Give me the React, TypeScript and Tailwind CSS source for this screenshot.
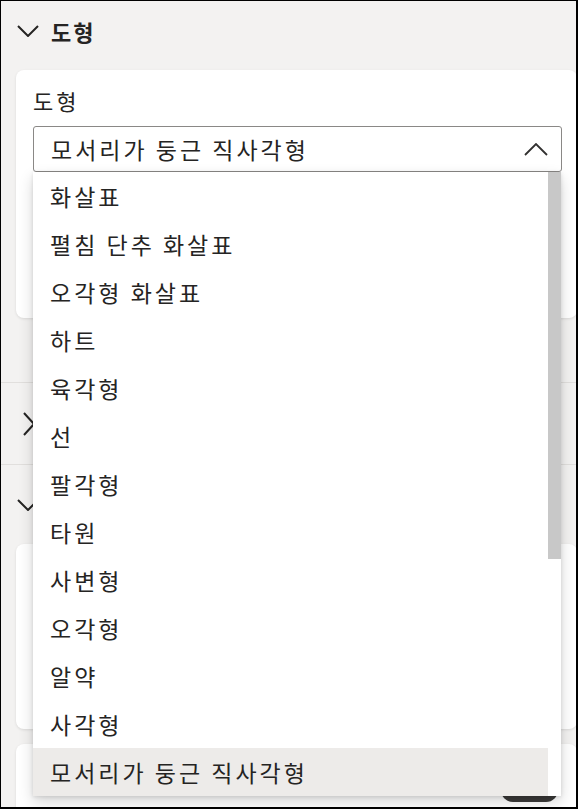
import React from "react";

const shapes: string[] = [
  "화살표",
  "펼침 단추 화살표",
  "오각형 화살표",
  "하트",
  "육각형",
  "선",
  "팔각형",
  "타원",
  "사변형",
  "오각형",
  "알약",
  "사각형",
  "모서리가 둥근 직사각형",
];

const selected = "모서리가 둥근 직사각형";

const ChevronDown: React.FC = () => (
  <svg width="22" height="12" viewBox="0 0 22 12" fill="none">
    <polyline points="1,1 11,11 21,1" stroke="#252423" strokeWidth="2" />
  </svg>
);

const ChevronRight: React.FC = () => (
  <svg width="12" height="24" viewBox="0 0 12 24" fill="none">
    <polyline points="1,1 11,12 1,23" stroke="#252423" strokeWidth="2" />
  </svg>
);

const ChevronUp: React.FC = () => (
  <svg width="24" height="13" viewBox="0 0 24 13" fill="none">
    <polyline points="1,12 12,1 23,12" stroke="#323130" strokeWidth="1.8" />
  </svg>
);

const ShapeDropdown: React.FC = () => (
  <div className="relative w-[529px]">
    <div className="h-[46px] flex items-center justify-between rounded-[3px] border border-[#8a8886] bg-white pl-[17px] pr-[13px] text-[23px] tracking-[3px]">
      <span>{selected}</span>
      <ChevronUp />
    </div>
    <div className="absolute left-0 top-full z-10 w-[528px] h-[624px] bg-white shadow-[0_6px_14px_rgba(0,0,0,0.16),0_1px_4px_rgba(0,0,0,0.12)]">
      <div className="w-[515px]">
        {shapes.map((shape) => (
          <div
            key={shape}
            className={
              shape === selected
                ? "h-[48px] flex items-center pl-[17px] text-[23px] tracking-[3px] bg-[#edebe9]"
                : "h-[48px] flex items-center pl-[17px] text-[23px] tracking-[3px]"
            }
          >
            {shape}
          </div>
        ))}
      </div>
      <div className="absolute right-0 top-0 w-[13px] h-[387px] bg-[#c8c8c8]" />
    </div>
  </div>
);

export default function App() {
  return (
    <div className="w-[578px] h-[809px] overflow-hidden border-l border-t border-r-2 border-b-2 border-black bg-[#f3f2f1] text-[#252423] font-['Noto_Sans_CJK_KR','Noto_Sans',sans-serif]">
      {/* shape section */}
      <div className="h-[60px] flex items-center gap-[12px] pl-[16px]">
        <ChevronDown />
        <span className="text-[22px] font-bold tracking-[2px]">도형</span>
      </div>
      <div className="mt-[9px] ml-[15px] w-[561px] h-[248px] rounded-[8px] bg-white shadow-[0_1px_3px_rgba(0,0,0,0.1)] pt-[15px] pl-[17px]">
        <div className="h-[30px] flex items-center text-[22px] tracking-[3px] mb-[11px]">도형</div>
        <ShapeDropdown />
      </div>

      {/* collapsed section */}
      <div className="mt-[64px] border-t border-[#e1dfdd] h-[82px] flex items-center pl-[22px]">
        <ChevronRight />
      </div>

      {/* expanded section */}
      <div className="border-t border-[#e1dfdd] h-[80px] flex items-center pl-[16px]">
        <ChevronDown />
      </div>
      <div className="ml-[15px] w-[561px] h-[185px] rounded-[8px] bg-white shadow-[0_1px_3px_rgba(0,0,0,0.1)]" />
      <div className="mt-[15px] ml-[15px] w-[561px] h-[120px] rounded-[8px] bg-white shadow-[0_1px_3px_rgba(0,0,0,0.1)] pt-[34px] pr-[19px] flex justify-end">
        <div className="w-[57px] h-[24px] rounded-full bg-[#3b3a39]" />
      </div>
    </div>
  );
}
